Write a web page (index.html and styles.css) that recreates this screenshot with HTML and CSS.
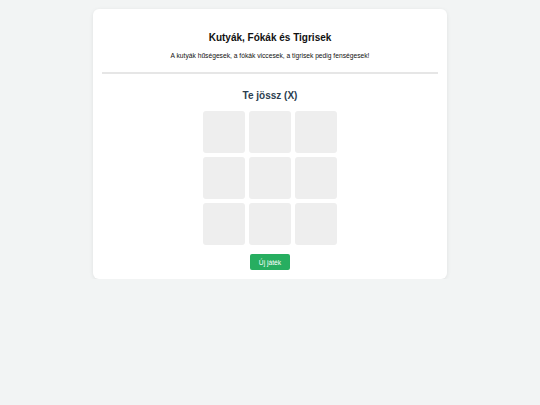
FILE: index.html
```html
<!DOCTYPE html>
<html lang="hu">
<head>
<meta charset="utf-8">
<link rel="stylesheet" href="styles.css">
</head>
<body>
<div class="card">
  <header class="head">
    <h1 class="title">Kutyák, Fókák és Tigrisek</h1>
    <p class="sub">A kutyák hűségesek, a fókák viccesek, a tigrisek pedig fenségesek!</p>
  </header>
  <div class="game">
    <h2 class="status">Te jössz (X)</h2>
    <div class="board">
      <div class="cell"></div><div class="cell"></div><div class="cell"></div>
      <div class="cell"></div><div class="cell"></div><div class="cell"></div>
      <div class="cell"></div><div class="cell"></div><div class="cell"></div>
    </div>
    <button class="btn">Új játék</button>
  </div>
</div>
</body>
</html>
```
FILE: styles.css
```css
html, body { margin: 0; padding: 0; }
body {
  background: #f2f4f4;
  font-family: "Liberation Sans", Arial, sans-serif;
  padding-top: 9px;
}
.card {
  width: 354px;
  margin: 0 auto;
  background: #fff;
  border-radius: 6px;
  box-shadow: 0 1px 4px rgba(0,0,0,0.08);
  padding: 0 9px 9px;
  box-sizing: border-box;
}
.head {
  text-align: center;
  padding-top: 21px;
  padding-bottom: 11px;
  border-bottom: 2px solid #e6e6e6;
}
.title {
  margin: 0;
  font-size: 10px;
  line-height: 16px;
  font-weight: bold;
  color: #111;
}
.sub {
  margin: 5px 0 0;
  font-size: 6.7px;
  line-height: 10px;
  color: #111;
}
.game {
  display: flex;
  flex-direction: column;
  align-items: center;
  padding-top: 15px;
}
.status {
  margin: 0;
  font-size: 10px;
  line-height: 14px;
  font-weight: bold;
  color: #2c3e50;
}
.board {
  margin-top: 8px;
  display: grid;
  grid-template-columns: repeat(3, 42px);
  grid-auto-rows: 42px;
  gap: 4px;
}
.cell {
  background: #eeeeee;
  border-radius: 3px;
}
.btn {
  margin-top: 9px;
  width: 40px;
  height: 16px;
  padding: 0;
  border: none;
  border-radius: 2px;
  background: #27ae60;
  color: #fff;
  font-family: "Liberation Sans", Arial, sans-serif;
  font-size: 6.7px;
}
```
